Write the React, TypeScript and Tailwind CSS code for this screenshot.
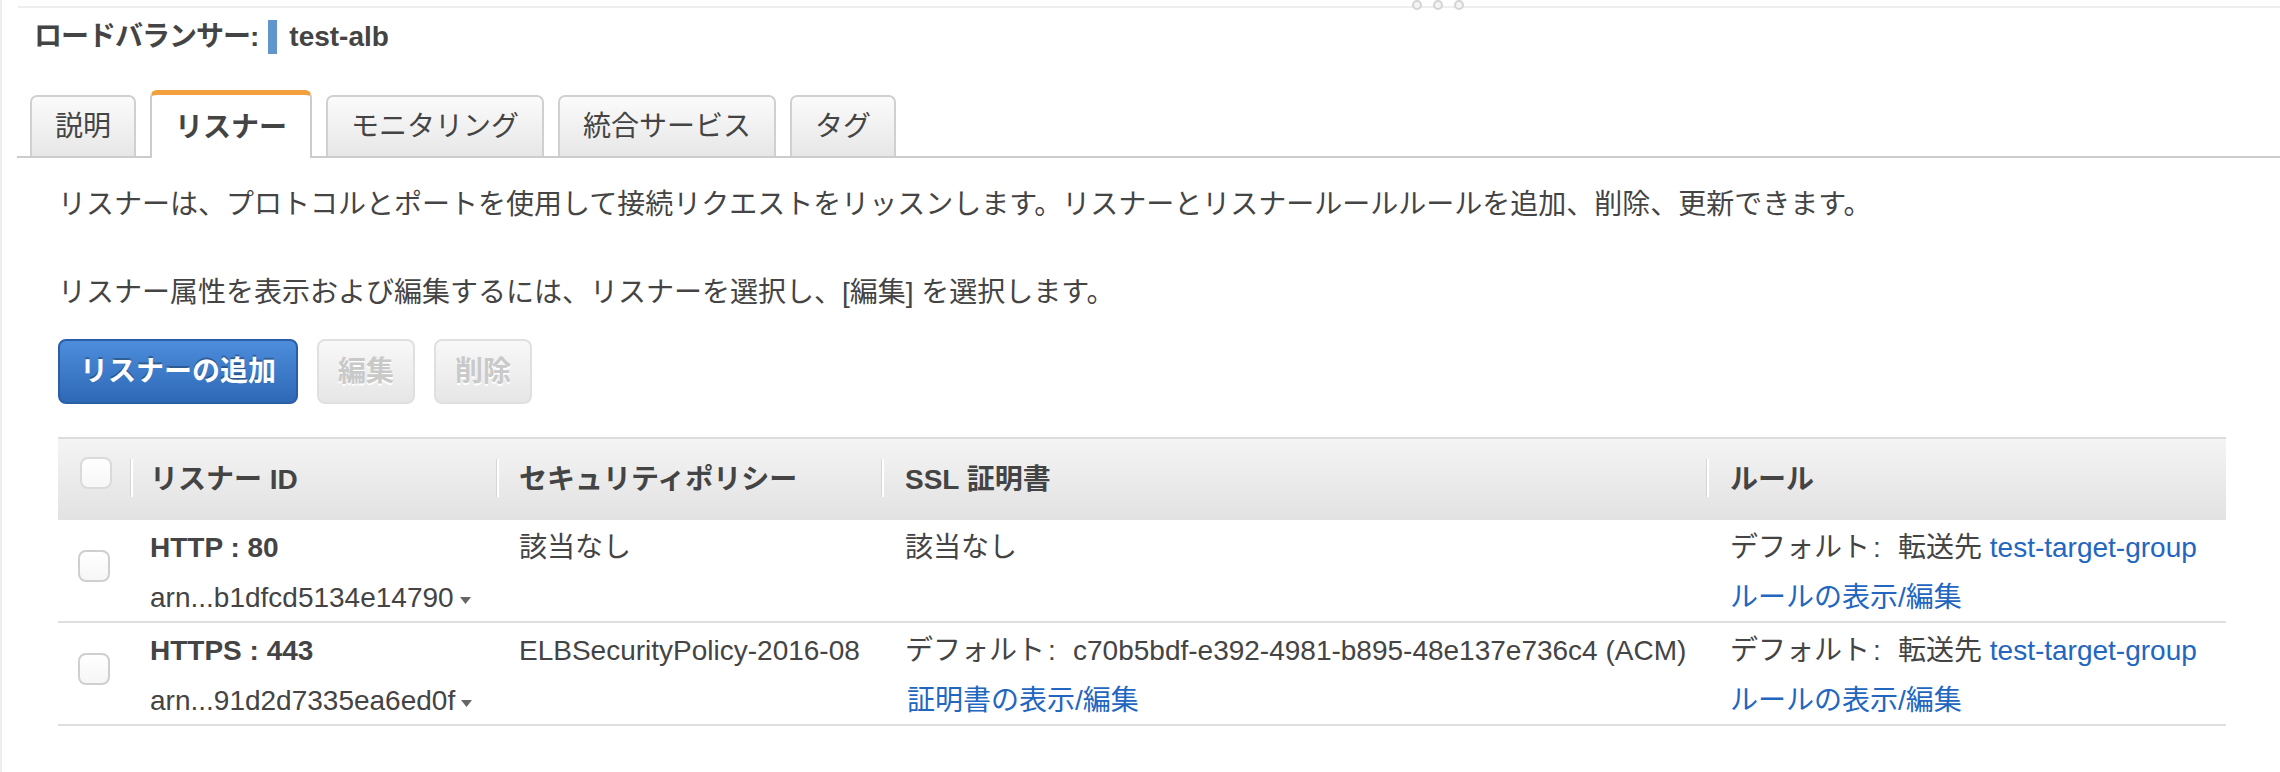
import { ReactNode } from 'react'

const font = "font-['Liberation_Sans','Noto_Sans_CJK_JP',sans-serif]"

const tabs = ['説明', 'リスナー', 'モニタリング', '統合サービス', 'タグ']

const listeners = [
  {
    id: 'HTTP : 80',
    arn: 'arn...b1dfcd5134e14790',
    policy: '該当なし',
    cert: null as string | null,
  },
  {
    id: 'HTTPS : 443',
    arn: 'arn...91d2d7335ea6ed0f',
    policy: 'ELBSecurityPolicy-2016-08',
    cert: 'c70b5bdf-e392-4981-b895-48e137e736c4 (ACM)',
  },
]

function Checkbox({ className = '' }: { className?: string }) {
  return (
    <div
      className={`w-[32px] h-[32px] rounded-[8px] border-2 border-[#cfcfcf] bg-gradient-to-b from-white to-[#f6f6f6] ${className}`}
    />
  )
}

function HeaderCell({ children, pad }: { children: ReactNode; pad: string }) {
  return (
    <div className={`relative flex items-center h-full ${pad}`}>
      <div className="absolute left-0 top-[20px] h-[38px] w-[2px] bg-white shadow-[-1px_0_0_#d6d6d6]" />
      <span className="font-bold">{children}</span>
    </div>
  )
}

function Caret() {
  return (
    <svg width="11" height="7" viewBox="0 0 11 7" className="ml-[6px] mt-[4px]">
      <path d="M0 0 L11 0 L5.5 7 Z" fill="#666" />
    </svg>
  )
}

// "デフォルト:" with the colon sitting left in its full-width cell, as on the Mac font
function Default() {
  return (
    <>
      デフォルト<span className="inline-block w-[28px] pl-[3px]">:</span>
    </>
  )
}

export default function App() {
  return (
    <div className={`${font} w-[2280px] h-[772px] bg-white text-[#444] border-l-2 border-[#eee] overflow-hidden`}>
      {/* top strip with drag handle */}
      <div className="relative ml-[16px] mt-[6px] h-[2px] bg-[#eee]">
        <div className="absolute left-[1394px] -top-[6px] flex gap-[11px]">
          <div className="w-[10px] h-[10px] rounded-full border-2 border-[#d4d4d4] bg-[#f4f4f4]" />
          <div className="w-[10px] h-[10px] rounded-full border-2 border-[#d4d4d4] bg-[#f4f4f4]" />
          <div className="w-[10px] h-[10px] rounded-full border-2 border-[#d4d4d4] bg-[#f4f4f4]" />
        </div>
      </div>

      {/* title */}
      <div className="flex items-center h-[34px] mt-[12px] pl-[32px] text-[28px] font-bold">
        <span className="tracking-[-1px]">ロードバランサー:</span>
        <div className="w-[9px] h-[34px] bg-[#6196cc] ml-[10px]" />
        <span className="ml-[12px]">test-alb</span>
      </div>

      {/* tabs */}
      <div className="mt-[36px] ml-[15px] flex items-end gap-[14px] pl-[13px] h-[68px] border-b-2 border-[#ccc] text-[28px]">
        {tabs.map((t) =>
          t === 'リスナー' ? (
            <div
              key={t}
              className="-mb-[2px] h-[68px] flex items-center px-[23px] pt-[2px] bg-white border-2 border-b-0 border-[#ccc] border-t-[5px] border-t-[#f2a03b] rounded-t-[7px] font-bold"
            >
              {t}
            </div>
          ) : (
            <div
              key={t}
              className="h-[61px] flex items-center px-[23px] bg-gradient-to-b from-[#fbfbfb] to-[#e7e7e7] border-2 border-b-0 border-[#d0d0d0] rounded-t-[7px]"
            >
              {t}
            </div>
          )
        )}
      </div>

      {/* description */}
      <div className="pl-[56px] text-[28px] leading-[40px]">
        <p className="mt-[27px]">
          リスナーは、プロトコルとポートを使用して接続リクエストをリッスンします。リスナーとリスナールールルールを追加、削除、更新できます。
        </p>
        <p className="mt-[48px]">リスナー属性を表示および編集するには、リスナーを選択し、[編集] を選択します。</p>

        {/* buttons */}
        <div className="flex mt-[26px] gap-[19px] text-[28px] font-bold">
          <button className="h-[65px] px-[20px] rounded-[8px] border-2 border-[#2b5ea6] bg-gradient-to-b from-[#4d8ddb] to-[#2e69b6] text-white [text-shadow:0_-2px_0_rgba(0,0,0,0.3)]">
            リスナーの追加
          </button>
          <button className="h-[65px] px-[19px] rounded-[8px] border-2 border-[#e0e0e0] bg-gradient-to-b from-[#f8f8f8] to-[#e6e6e6] text-[#c9c9c9] [text-shadow:0_2px_0_#fff]">
            編集
          </button>
          <button className="h-[65px] px-[19px] rounded-[8px] border-2 border-[#e0e0e0] bg-gradient-to-b from-[#f8f8f8] to-[#e6e6e6] text-[#c9c9c9] [text-shadow:0_2px_0_#fff]">
            削除
          </button>
        </div>

        {/* table */}
        <div className="mt-[33px] w-[2168px] text-[28px] leading-[40px]">
          <div className="grid grid-cols-[73px_366px_385px_825px_519px] h-[83px] border-t-2 border-[#dcdcdc] bg-gradient-to-b from-[#f4f4f4] to-[#e2e2e2]">
            <div className="pl-[22px] pt-[18px]">
              <Checkbox className="border-[#dadada]" />
            </div>
            <HeaderCell pad="pl-[19px]">リスナー ID</HeaderCell>
            <HeaderCell pad="pl-[22px]">セキュリティポリシー</HeaderCell>
            <HeaderCell pad="pl-[23px]">SSL 証明書</HeaderCell>
            <HeaderCell pad="pl-[23px]">ルール</HeaderCell>
          </div>

          {listeners.map((l) => (
            <div
              key={l.id}
              className="grid grid-cols-[73px_366px_385px_825px_519px] h-[103px] border-b-2 border-[#dedede]"
            >
              <div className="pl-[20px] pt-[30px]">
                <Checkbox />
              </div>
              <div className="pl-[19px] pt-[8px] flex flex-col gap-[10px]">
                <span className="font-bold">{l.id}</span>
                <span className="flex items-center">
                  {l.arn}
                  <Caret />
                </span>
              </div>
              <div className="pl-[22px] pt-[8px]">{l.policy}</div>
              <div className="pl-[23px] pt-[8px] flex flex-col gap-[10px]">
                {l.cert ? (
                  <>
                    <span>
                      <Default />
                      {l.cert}
                    </span>
                    <a className="text-[#2266c0] pl-[2px]">証明書の表示/編集</a>
                  </>
                ) : (
                  <span>該当なし</span>
                )}
              </div>
              <div className="pl-[23px] pt-[8px] flex flex-col gap-[10px]">
                <span>
                  <Default />
                  転送先 <a className="text-[#2266c0]">test-target-group</a>
                </span>
                <a className="text-[#2266c0]">ルールの表示/編集</a>
              </div>
            </div>
          ))}
        </div>
      </div>
    </div>
  )
}
